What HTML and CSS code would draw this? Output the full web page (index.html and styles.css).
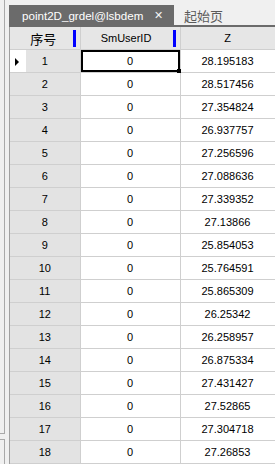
FILE: index.html
```html
<!DOCTYPE html>
<html>
<head>
  <title>point2D_grdel@lsbdem</title>
  <link rel="stylesheet" href="styles.css">
</head>
<body>
  <div class="side">
    <div class="side-top"></div>
    <div class="side-bottom"></div>
  </div>

  <div class="main">
    <div class="tabs">
      <div class="tab active"><span class="title">point2D_grdel@lsbdem</span><span class="close">&#x2715;</span></div>
      <div class="tab">起始页</div>
    </div>

    <div class="grid">
      <table>
        <colgroup><col class="c1"><col class="c2"><col class="c3"></colgroup>
        <thead>
          <tr>
            <th class="mark first">序号</th>
            <th class="mark">SmUserID</th>
            <th>Z</th>
          </tr>
        </thead>
        <tbody>
          <tr><td class="num current">1</td><td class="sel">0</td><td>28.195183</td></tr>
          <tr><td class="num">2</td><td>0</td><td>28.517456</td></tr>
          <tr><td class="num">3</td><td>0</td><td>27.354824</td></tr>
          <tr><td class="num">4</td><td>0</td><td>26.937757</td></tr>
          <tr><td class="num">5</td><td>0</td><td>27.256596</td></tr>
          <tr><td class="num">6</td><td>0</td><td>27.088636</td></tr>
          <tr><td class="num">7</td><td>0</td><td>27.339352</td></tr>
          <tr><td class="num">8</td><td>0</td><td>27.13866</td></tr>
          <tr><td class="num">9</td><td>0</td><td>25.854053</td></tr>
          <tr><td class="num">10</td><td>0</td><td>25.764591</td></tr>
          <tr><td class="num">11</td><td>0</td><td>25.865309</td></tr>
          <tr><td class="num">12</td><td>0</td><td>26.25342</td></tr>
          <tr><td class="num">13</td><td>0</td><td>26.258957</td></tr>
          <tr><td class="num">14</td><td>0</td><td>26.875334</td></tr>
          <tr><td class="num">15</td><td>0</td><td>27.431427</td></tr>
          <tr><td class="num">16</td><td>0</td><td>27.52865</td></tr>
          <tr><td class="num">17</td><td>0</td><td>27.304718</td></tr>
          <tr><td class="num">18</td><td>0</td><td>27.26853</td></tr>
        </tbody>
      </table>
    </div>
  </div>
</body>
</html>
```

FILE: styles.css
```css
html, body {
  margin: 0;
  padding: 0;
}

body {
  width: 275px;
  height: 464px;
  overflow: hidden;
  display: flex;
  background-color: #f0f0f0;
  font-family: "Liberation Sans", Arial, "Noto Sans CJK SC", sans-serif;
  color: #000;
}

/* left dock strip */
.side {
  width: 9px;
  flex: none;
  display: flex;
  flex-direction: column;
}

.side-top {
  width: 4px;
  height: 433px;
  border-right: 1px solid #a9a9a9;
  border-bottom: 1px solid #a9a9a9;
}

.side-bottom {
  width: 4px;
  flex: 1;
  margin-top: 5px;
  border-right: 1px solid #a9a9a9;
  border-top: 1px solid #a9a9a9;
}

.main {
  flex: 1;
  min-width: 0;
  display: flex;
  flex-direction: column;
}

/* document tabs */
.tabs {
  height: 20px;
  padding-top: 5px;
  display: flex;
  border-bottom: 2px solid #6b6b6b;
}

.tab {
  display: flex;
  align-items: center;
  padding: 0 10px;
  font-size: 13px;
  color: #5a5a5a;
  font-family: "Noto Sans CJK SC", "Liberation Sans", sans-serif;
}

.tab.active {
  width: 141px;
  padding: 0 11px 0 13px;
  background-color: #6b6b6b;
  color: #fff;
  font-family: "Liberation Sans", Arial, sans-serif;
  font-size: 11.6px;
  justify-content: space-between;
}

.close {
  font-size: 11px;
  color: #f4f4f4;
}

/* data grid */
.grid {
  flex: 1;
  border-left: 1px solid #a0a0a0;
  background-color: #fff;
  overflow: hidden;
}

table {
  border-collapse: collapse;
  table-layout: fixed;
  width: 265px;
  font-size: 11px;
}

col.c1 { width: 70px; }
col.c2 { width: 100px; }
col.c3 { width: 95px; }

th {
  position: relative;
  height: 22px;
  padding: 0;
  font-weight: normal;
  font-size: 11px;
  background-color: #e6e6e6;
  border-right: 1px solid #cfcfcf;
  border-bottom: 1px solid #cfcfcf;
}

th.mark {
  padding-right: 8px;
}

th.first {
  padding-right: 3px;
  font-size: 13px;
  font-family: "Noto Sans CJK SC", sans-serif;
}

th.mark::after {
  content: "";
  position: absolute;
  right: 4px;
  top: 3px;
  width: 3px;
  height: 17px;
  background-color: #0000ff;
}

td {
  position: relative;
  height: 22px;
  padding: 0;
  text-align: center;
  border-right: 1px solid #cfcfcf;
  border-bottom: 1px solid #cfcfcf;
}

td.num {
  background-color: #e3e3e3;
}

td.current {
  background: linear-gradient(to right, #fff 16px, #e3e3e3 16px);
}

td.current::before {
  content: "";
  position: absolute;
  left: 5px;
  top: 8px;
  border-top: 4px solid transparent;
  border-bottom: 4px solid transparent;
  border-left: 4px solid #000;
}

td.sel {
  box-shadow: inset 0 0 0 2px #000;
}

td.sel::after {
  content: "";
  position: absolute;
  right: -1px;
  bottom: -1px;
  width: 4px;
  height: 4px;
  background-color: #000;
}
```
